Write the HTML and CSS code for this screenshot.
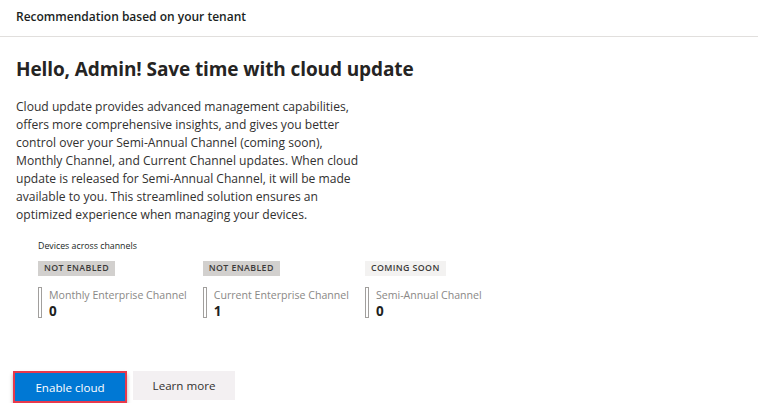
FILE: index.html
```html
<!DOCTYPE html>
<html>
<head>
<meta charset="utf-8">
<link rel="stylesheet" href="styles.css">
</head>
<body>
<div class="header">Recommendation based on your tenant</div>
<div class="content">
  <h1 class="title">Hello, Admin! Save time with cloud update</h1>
  <p class="desc">Cloud update provides advanced management capabilities,<br>offers more comprehensive insights, and gives you better<br>control over your Semi-Annual Channel (coming soon),<br>Monthly Channel, and Current Channel updates. When cloud<br>update is released for Semi-Annual Channel, it will be made<br>available to you. This streamlined solution ensures an<br>optimized experience when managing your devices.</p>
  <div class="devices">
    <div class="devices-label">Devices across channels</div>
    <div class="channels">
      <div class="channel">
        <span class="badge">NOT ENABLED</span>
        <div class="stat">
          <div class="bar"></div>
          <div class="stat-text">
            <div class="stat-name">Monthly Enterprise Channel</div>
            <div class="stat-num">0</div>
          </div>
        </div>
      </div>
      <div class="channel">
        <span class="badge">NOT ENABLED</span>
        <div class="stat">
          <div class="bar"></div>
          <div class="stat-text">
            <div class="stat-name">Current Enterprise Channel</div>
            <div class="stat-num">1</div>
          </div>
        </div>
      </div>
      <div class="channel">
        <span class="badge badge-soon">COMING SOON</span>
        <div class="stat">
          <div class="bar"></div>
          <div class="stat-text">
            <div class="stat-name">Semi-Annual Channel</div>
            <div class="stat-num">0</div>
          </div>
        </div>
      </div>
    </div>
  </div>
  <div class="actions">
    <button class="btn btn-primary">Enable cloud</button>
    <button class="btn btn-secondary">Learn more</button>
  </div>
</div>
</body>
</html>
```
FILE: styles.css
```css
* { box-sizing: border-box; }
body {
  margin: 0;
  background: #ffffff;
  font-family: "Open Sans", "Noto Sans", sans-serif;
  color: #323130;
}
.header {
  height: 37px;
  padding: 8px 16px 0;
  font-size: 12px;
  font-weight: 600;
  color: #201f1e;
  border-bottom: 1px solid #e1dfdd;
}
.content {
  padding: 0 16px;
}
.title {
  margin: 18px 0 0;
  font-size: 19px;
  line-height: 28px;
  font-weight: 700;
  color: #252423;
  letter-spacing: -0.1px;
}
.desc {
  margin: 15px 0 0;
  font-size: 12.1px;
  line-height: 18px;
  color: #323130;
}
.devices {
  padding-left: 22px;
  margin-top: 16px;
}
.devices-label {
  font-size: 8.8px;
  line-height: 12px;
  color: #201f1e;
}
.channels {
  display: flex;
  gap: 16px;
  margin-top: 9px;
}
.channel {
  display: flex;
  flex-direction: column;
  align-items: flex-start;
}
.badge {
  display: inline-block;
  background: #d2d0ce;
  color: #3b3a39;
  font-size: 8.8px;
  font-weight: 600;
  letter-spacing: 0.4px;
  line-height: 15px;
  padding: 0 6px;
  height: 15px;
}
.badge-soon {
  background: #f3f2f1;
}
.stat {
  display: flex;
  margin-top: 11px;
}
.bar {
  width: 4px;
  height: 31px;
  border: 1px solid #a19f9d;
  margin-right: 7px;
}
.stat-text {
  display: flex;
  flex-direction: column;
}
.stat-name {
  font-size: 10.6px;
  line-height: 14px;
  color: #8a8886;
  margin-top: 1px;
}
.stat-num {
  font-size: 13.5px;
  font-weight: 700;
  line-height: 17px;
  color: #201f1e;
  margin-top: 1px;
}
.actions {
  display: flex;
  gap: 6px;
  margin-top: 51px;
}
.btn {
  font-family: inherit;
  font-size: 11.6px;
  height: 30px;
  border: none;
  cursor: pointer;
}
.btn-primary {
  margin-left: -3px;
  width: 114px;
  height: 32px;
  background: #0078d4;
  color: #ffffff;
  border: 2px solid #e8394c;
  box-shadow: 0 3px 4px rgba(0,0,0,0.3);
}
.btn-secondary {
  width: 102px;
  height: 29px;
  background: #f3f0f2;
  color: #323130;
}
```
